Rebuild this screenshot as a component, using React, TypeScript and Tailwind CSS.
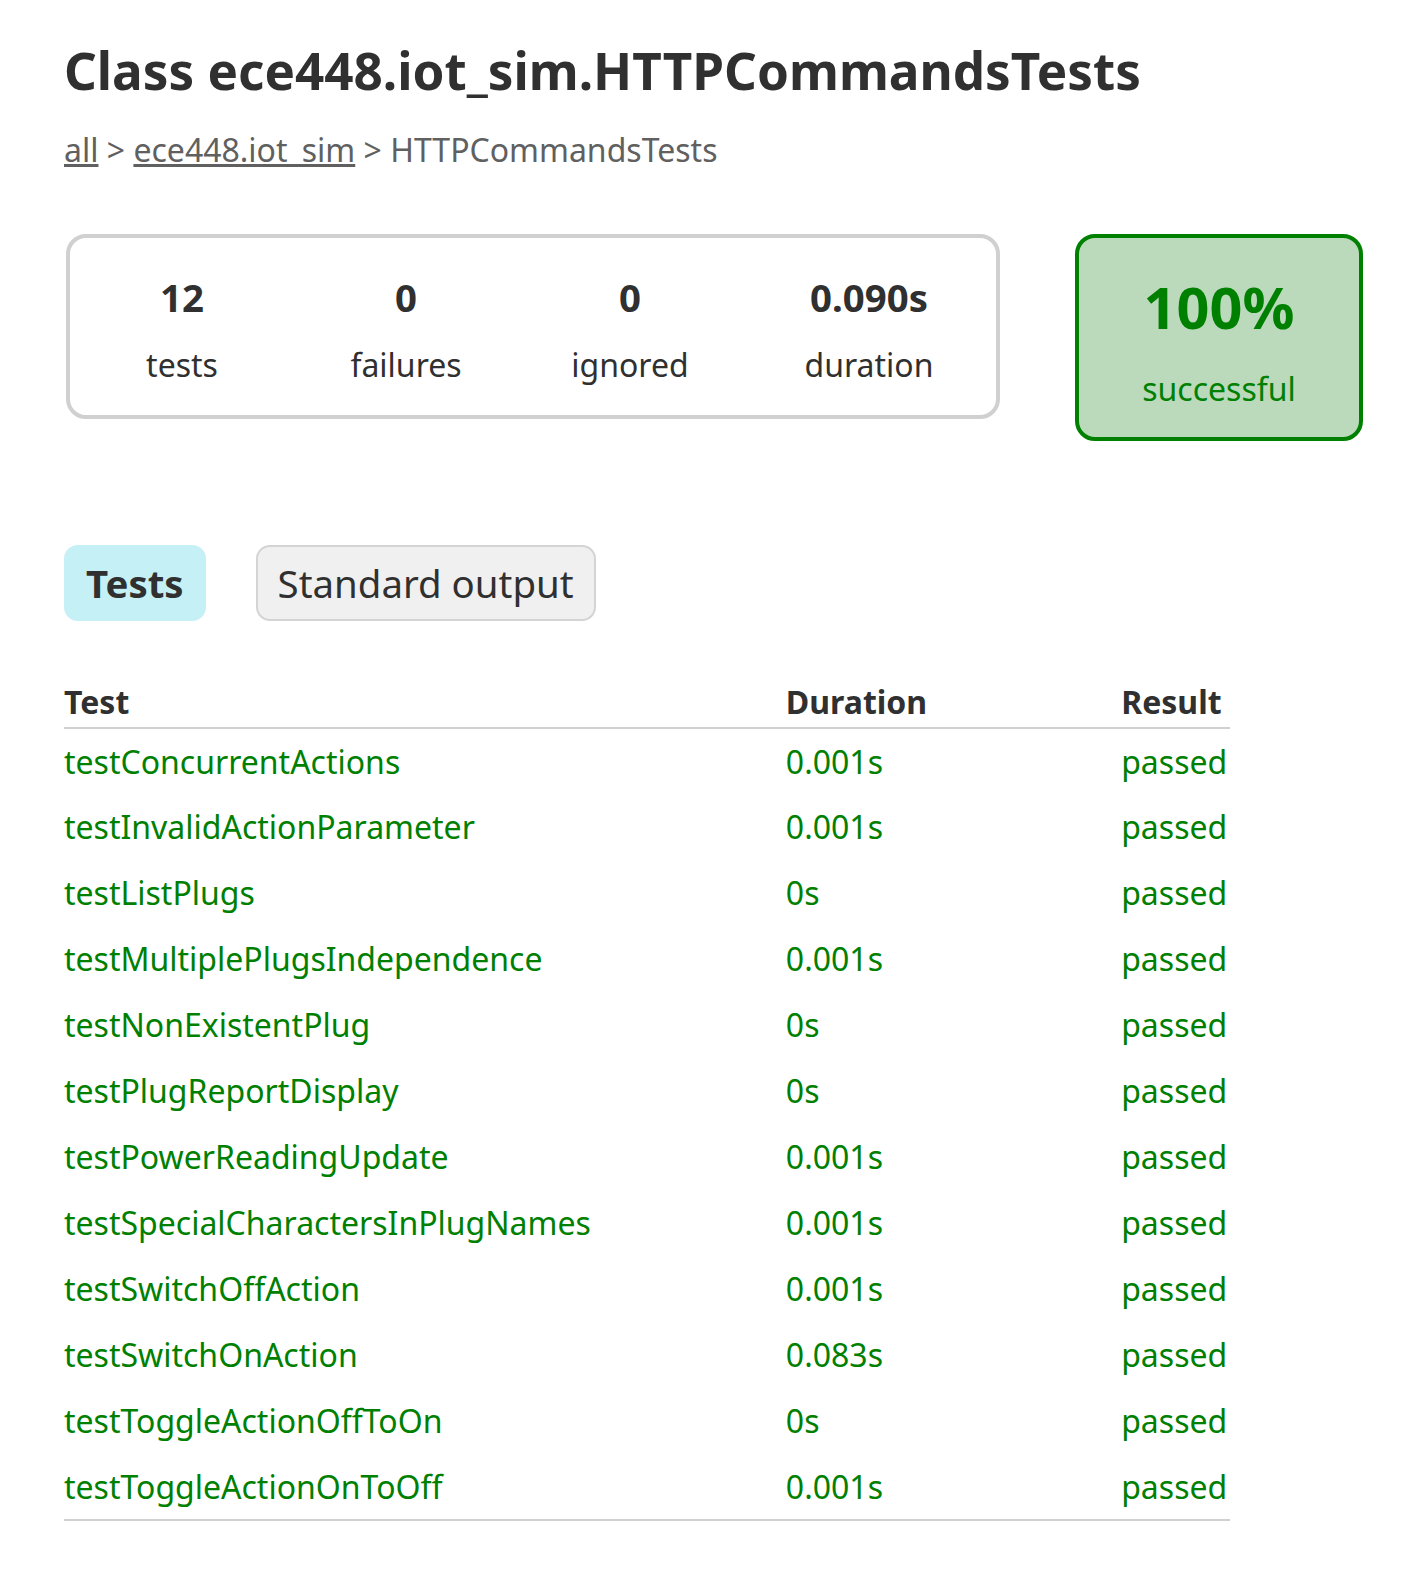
import React from "react";

const rows: [string, string][] = [
  ["testConcurrentActions", "0.001s"],
  ["testInvalidActionParameter", "0.001s"],
  ["testListPlugs", "0s"],
  ["testMultiplePlugsIndependence", "0.001s"],
  ["testNonExistentPlug", "0s"],
  ["testPlugReportDisplay", "0s"],
  ["testPowerReadingUpdate", "0.001s"],
  ["testSpecialCharactersInPlugNames", "0.001s"],
  ["testSwitchOffAction", "0.001s"],
  ["testSwitchOnAction", "0.083s"],
  ["testToggleActionOffToOn", "0s"],
  ["testToggleActionOnToOff", "0.001s"],
];

export default function App() {
  return (
    <div
      className="min-h-[1570px] bg-white pl-[64px] pt-[35px] text-[#303030]"
      style={{ fontFamily: '"Noto Sans", sans-serif' }}
    >
      <h1 className="text-[51.2px] font-bold leading-[70px] whitespace-nowrap">
        Class ece448.iot_sim.HTTPCommandsTests
      </h1>
      <div className="mt-[23px] text-[32px] leading-[44px] text-[#606060] whitespace-nowrap">
        <a className="underline">all</a> &gt; <a className="underline">ece448.iot_sim</a> &gt; HTTPCommandsTests
      </div>

      <div className="mt-[62px] flex items-start">
        <div className="ml-[2px] flex rounded-[20px] border-[4px] border-[#d0d0d0]">
          {[
            ["12", "tests", 224],
            ["0", "failures", 224],
            ["0", "ignored", 224],
            ["0.090s", "duration", 254],
          ].map(([n, l, w]) => (
            <div
              key={l as string}
              className="flex flex-col items-center pt-[33px] pb-[28px]"
              style={{ width: w as number }}
            >
              <div className="text-[38.4px] font-bold leading-[52px]">{n}</div>
              <div className="mt-[20px] text-[32px] leading-[44px]">{l}</div>
            </div>
          ))}
        </div>
        <div className="ml-[75px] flex w-[288px] flex-col items-center rounded-[20px] border-[4px] border-[#008000] bg-[#bbd9bb] pt-[30px] pb-[26px] text-[#008000]">
          <div className="text-[57.6px] font-bold leading-[78px]">100%</div>
          <div className="mt-[21px] text-[32px] leading-[44px]">successful</div>
        </div>
      </div>

      <div className="mt-[104px] flex">
        <div className="rounded-[14px] border-[2px] border-[#c5f0f5] bg-[#c5f0f5] px-[20px] py-[10px] text-[38.4px] font-bold leading-[52px]">
          Tests
        </div>
        <div className="ml-[50px] rounded-[14px] border-[2px] border-[#d4d4d4] bg-[#f0f0f0] px-[20px] py-[10px] text-[38.4px] leading-[52px]">
          Standard output
        </div>
      </div>

      <table className="mt-[59px] border-collapse border-b-[2px] border-[#d0d0d0] text-[32px]">
        <thead>
          <tr className="border-b-[2px] border-[#d0d0d0]">
            <th className="pb-[3px] text-left font-bold leading-[44px] whitespace-nowrap">Test</th>
            <th className="pb-[3px] pl-[195px] text-left font-bold leading-[44px] whitespace-nowrap">Duration</th>
            <th className="pb-[3px] pl-[194px] pr-[3px] text-left font-bold leading-[44px] whitespace-nowrap">Result</th>
          </tr>
        </thead>
        <tbody className="text-[#008000]">
          {rows.map(([name, d]) => (
            <tr key={name}>
              <td className="h-[66px] whitespace-nowrap leading-[44px]">{name}</td>
              <td className="pl-[195px] whitespace-nowrap leading-[44px]">{d}</td>
              <td className="pl-[194px] pr-[3px] whitespace-nowrap leading-[44px]">passed</td>
            </tr>
          ))}
        </tbody>
      </table>
    </div>
  );
}
